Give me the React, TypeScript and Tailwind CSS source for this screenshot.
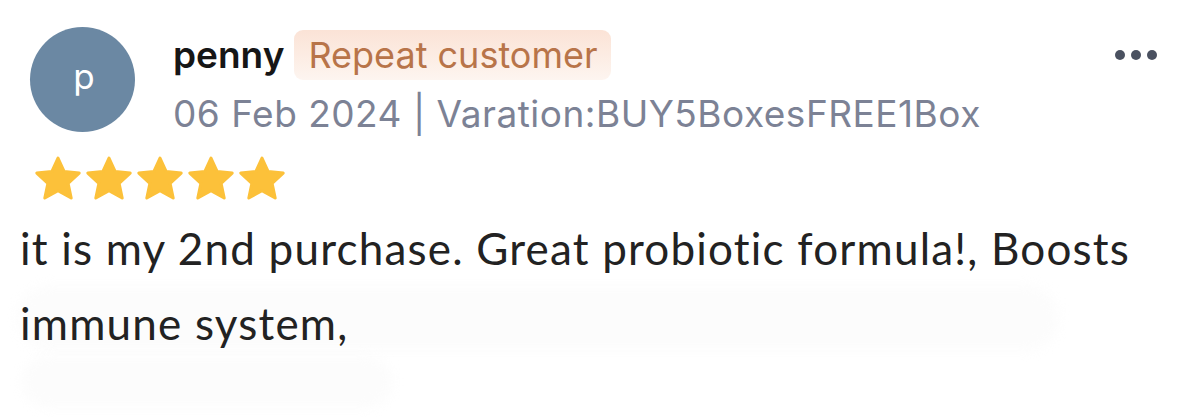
import React from "react";

const Star = () => (
  <svg width="46" height="44" viewBox="0 0 46 44" className="overflow-visible">
    <polygon
      points="23,2 29.2,15.6 44.2,17.1 33.1,27.3 36.2,42 23,34.6 9.8,42 12.9,27.3 1.8,17.1 16.8,15.6"
      fill="#fcc13a"
      stroke="#fcc13a"
      strokeWidth="3"
      strokeLinejoin="round"
    />
  </svg>
);

export default function App() {
  return (
    <div className="relative w-[1200px] h-[417px] bg-white overflow-hidden font-['Inter',sans-serif]">
      <div className="absolute left-[18px] top-[286px] w-[1040px] h-[64px] rounded-[30px] bg-[#fcfcfc] blur-[6px]" />
      <div className="absolute left-[22px] top-[356px] w-[370px] h-[52px] rounded-[26px] bg-[#fcfcfc] blur-[6px]" />
      <div className="relative">
        <div className="flex items-start pt-[27px] pl-[30px] pr-[43px]">
          <div className="w-[105px] h-[105px] rounded-full bg-[#6b88a3] flex items-center justify-center text-white text-[35px] leading-none pb-[6px] pl-[3px] shrink-0">
            p
          </div>
          <div className="ml-[38px] mt-[3px] flex-1">
            <div className="flex items-center h-[50px]">
              <span className="text-[37px] font-semibold text-[#161616] leading-[50px]">penny</span>
              <span className="ml-[10px] px-[14px] h-[50px] flex items-center rounded-[9px] bg-gradient-to-b from-[#fbe3d6] to-[#fdf5f0] text-[#b87449] text-[36px] leading-none">
                Repeat customer
              </span>
            </div>
            <div className="mt-[12px] text-[37px] leading-[44px] text-[#7c8295] tracking-[0.5px]">
              06 Feb 2024 | Varation:BUY5BoxesFREE1Box
            </div>
          </div>
          <div className="flex gap-[6px] mt-[23px]">
            <span className="w-[10px] h-[10px] rounded-full bg-[#4a5160]" />
            <span className="w-[10px] h-[10px] rounded-full bg-[#4a5160]" />
            <span className="w-[10px] h-[10px] rounded-full bg-[#4a5160]" />
          </div>
        </div>
        <div className="flex gap-[5px] pl-[35px] mt-[20px]">
          <Star />
          <Star />
          <Star />
          <Star />
          <Star />
        </div>
        <div className="pl-[20px] pr-[40px] mt-[11px] text-[44px] leading-[75px] text-[#222222] font-['Lato',sans-serif] font-normal tracking-[1.2px]">
          it is my 2nd purchase. Great probiotic formula!, Boosts immune system,
        </div>
      </div>
    </div>
  );
}
